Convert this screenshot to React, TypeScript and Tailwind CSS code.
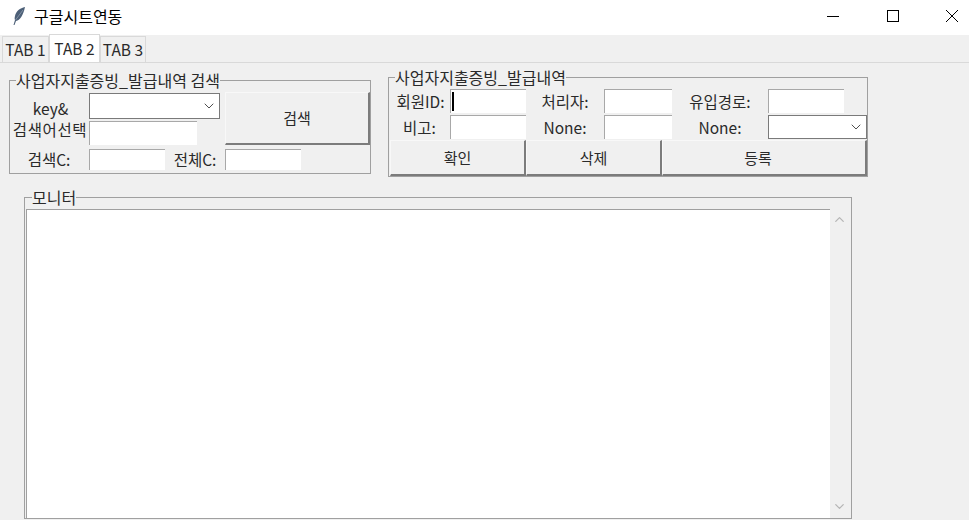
import { ChevronDown, ChevronUp } from "lucide-react";
import type { ReactNode } from "react";

const fontStack = { fontFamily: '"Noto Sans CJK KR", "Noto Sans", sans-serif' };

function Entry({ className = "", caret = false }: { className?: string; caret?: boolean }) {
  return (
    <div className={`h-full bg-white border-t border-l border-[#a8a8a8] ${className}`}>
      {caret ? <div className="ml-px mt-[2px] h-[19px] w-[2px] bg-black" /> : null}
    </div>
  );
}

function Combo({ className = "" }: { className?: string }) {
  return (
    <div className={`flex h-full items-center justify-end border border-[#7a7a7a] bg-white pr-[2px] ${className}`}>
      <ChevronDown size={16} strokeWidth={1.3} className="text-[#333]" />
    </div>
  );
}

function Label({ children, className = "" }: { children: ReactNode; className?: string }) {
  return (
    <div className={`flex items-center justify-center text-[15.5px] leading-none text-[#2a2a2a] ${className}`}>
      {children}
    </div>
  );
}

function Btn({ children, className = "" }: { children: ReactNode; className?: string }) {
  return (
    <div
      className={`flex items-center justify-center border-t border-l border-t-[#f8f8f8] border-l-[#f8f8f8] border-b-2 border-r-2 border-b-[#7c7c7c] border-r-[#7c7c7c] bg-[#f0f0f0] text-[15px] text-[#2a2a2a] ${className}`}
    >
      {children}
    </div>
  );
}

function Group({
  title,
  className,
  legendClass = "ml-[6px]",
  children,
}: {
  title: string;
  className: string;
  legendClass?: string;
  children: ReactNode;
}) {
  return (
    <fieldset className={`border border-[#a0a0a0] ${className}`}>
      <legend className={`h-[20px] text-[16px] leading-[20px] text-[#2a2a2a] ${legendClass}`}>{title}</legend>
      {children}
    </fieldset>
  );
}

export default function App() {
  return (
    <div className="flex h-[520px] w-[969px] flex-col overflow-hidden bg-[#f0f0f0]" style={fontStack}>
      <div className="flex h-[35px] shrink-0 items-center bg-white pb-[4px] pl-[11px]">
        <svg width="16" height="22" viewBox="0 0 16 20">
          <path d="M14 1C9 2 5 5 4 10c-.5 2-.5 3 0 4l-1.500 5h1l1.500-4c4-1 7-5 9-14z" fill="#4d6078" />
          <path d="M12 4 4.500 14" stroke="#9aa7b8" strokeWidth="0.7" fill="none" />
        </svg>
        <span className="ml-[7px] text-[16px] leading-none text-black">구글시트연동</span>
        <div className="ml-auto flex items-center">
          <svg width="14" height="14" viewBox="0 0 14 14" className="mr-[46px]">
            <path d="M1 7.500h12" stroke="#000" />
          </svg>
          <svg width="14" height="14" viewBox="0 0 14 14" className="mr-[45px]">
            <rect x="1.500" y="1.500" width="11" height="11" fill="none" stroke="#000" />
          </svg>
          <svg width="14" height="14" viewBox="0 0 14 14" className="mr-[10px]">
            <path d="M1 1l12 12M13 1 1 13" stroke="#000" />
          </svg>
        </div>
      </div>

      <div className="flex h-[28px] shrink-0 items-end border-b border-[#d9d9d9] pl-[2px] text-[15.5px] text-[#2a2a2a]">
        <div className="flex h-[26px] w-[47px] items-center justify-center border border-b-0 border-[#d9d9d9] pt-[1px]">TAB 1</div>
        <div className="flex h-[28px] w-[51px] items-center justify-center border border-b-0 border-[#d9d9d9] bg-white">TAB 2</div>
        <div className="flex h-[26px] w-[46px] items-center justify-center border border-b-0 border-[#d9d9d9] pt-[1px]">TAB 3</div>
      </div>

      <div className="flex items-start">
        <Group title="사업자지출증빙_발급내역 검색" className="ml-[9px] mt-[7px] h-[104px] w-[362px]">
          <div className="ml-[-1px] mt-[3px] grid grid-cols-[80px_76px_60px_76px_69px] grid-rows-[26px_24px_23px] gap-y-[2px]">
            <Label className="pl-[3px] pt-[6px]">key&amp;</Label>
            <div className="col-span-2 pr-[5px]">
              <Combo />
            </div>
            <Btn className="col-span-2 row-span-2 mt-[-1px]">검색</Btn>
            <Label className="pb-[6px] pl-[2px]">
              <span className="tracking-[0.6px] whitespace-nowrap">검색어선택</span>
            </Label>
            <div className="col-span-2 pr-[28px]">
              <Entry />
            </div>
            <Label className="mt-[2px]">검색C:</Label>
            <div className="mt-[2px]">
              <Entry />
            </div>
            <Label className="mt-[2px]">전체C:</Label>
            <div className="mt-[2px]">
              <Entry />
            </div>
          </div>
        </Group>

        <Group title="사업자지출증빙_발급내역" className="ml-[17px] mt-[4px] h-[110px] w-[480px]">
          <div className="grid grid-cols-[61px_76px_78px_68px_96px_99px] grid-rows-[24px_24px] gap-y-[2px] pt-[2px]">
            <Label className="pl-[2px] pt-[1px]">회원ID:</Label>
            <Entry caret />
            <Label className="pt-[1px]">처리자:</Label>
            <Entry />
            <Label className="pt-[1px]">유입경로:</Label>
            <div className="pr-[23px]">
              <Entry />
            </div>
            <Label className="pt-[1px]">비고:</Label>
            <Entry />
            <Label className="pt-[1px]">None:</Label>
            <Entry />
            <Label className="pt-[1px]">None:</Label>
            <Combo />
          </div>
          <div className="ml-px mt-[1px] grid h-[36px] grid-cols-[136px_136px_205px]">
            <Btn className="pt-[2px]">확인</Btn>
            <Btn className="pt-[2px]">삭제</Btn>
            <Btn className="pr-[12px] pt-[2px]">등록</Btn>
          </div>
        </Group>
      </div>

      <Group title="모니터" legendClass="ml-[7px]" className="ml-[24px] mt-[10px] h-[332px] w-[828px] shrink-0">
        <div className="ml-px mt-[2px] flex h-[309px] items-stretch">
          <div className="w-[804px] border-t border-l border-[#a0a0a0] bg-white" />
          <div className="flex w-[19px] flex-col items-center justify-between pb-[4px] pt-[3px]">
            <ChevronUp size={15} strokeWidth={2} className="text-[#b5b5b5]" />
            <ChevronDown size={15} strokeWidth={2} className="text-[#b5b5b5]" />
          </div>
        </div>
      </Group>
    </div>
  );
}
